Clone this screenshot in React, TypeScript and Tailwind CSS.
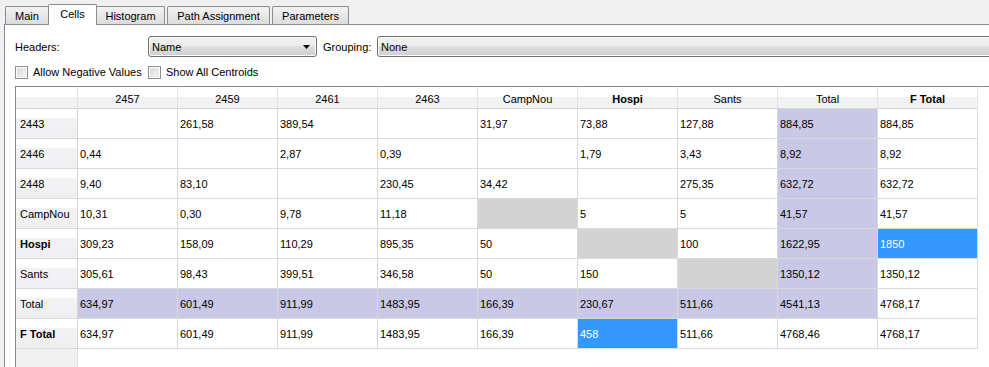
import React from "react";

type Cell = { t: string; k?: "p" | "b" | "g" };

const cols = ["2457", "2459", "2461", "2463", "CampNou", "Hospi", "Sants", "Total", "F Total"];
const boldCols = new Set(["Hospi", "F Total"]);

const c = (t: string, k?: "p" | "b" | "g"): Cell => ({ t, k });

const rows: { h: string; bold?: boolean; cells: Cell[] }[] = [
  { h: "2443", cells: [c(""), c("261,58"), c("389,54"), c(""), c("31,97"), c("73,88"), c("127,88"), c("884,85", "p"), c("884,85")] },
  { h: "2446", cells: [c("0,44"), c(""), c("2,87"), c("0,39"), c(""), c("1,79"), c("3,43"), c("8,92", "p"), c("8,92")] },
  { h: "2448", cells: [c("9,40"), c("83,10"), c(""), c("230,45"), c("34,42"), c(""), c("275,35"), c("632,72", "p"), c("632,72")] },
  { h: "CampNou", cells: [c("10,31"), c("0,30"), c("9,78"), c("11,18"), c("", "g"), c("5"), c("5"), c("41,57", "p"), c("41,57")] },
  { h: "Hospi", bold: true, cells: [c("309,23"), c("158,09"), c("110,29"), c("895,35"), c("50"), c("", "g"), c("100"), c("1622,95", "p"), c("1850", "b")] },
  { h: "Sants", cells: [c("305,61"), c("98,43"), c("399,51"), c("346,58"), c("50"), c("150"), c("", "g"), c("1350,12", "p"), c("1350,12")] },
  { h: "Total", cells: [c("634,97", "p"), c("601,49", "p"), c("911,99", "p"), c("1483,95", "p"), c("166,39", "p"), c("230,67", "p"), c("511,66", "p"), c("4541,13", "p"), c("4768,17")] },
  { h: "F Total", bold: true, cells: [c("634,97"), c("601,49"), c("911,99"), c("1483,95"), c("166,39"), c("458", "b"), c("511,66"), c("4768,46"), c("4768,17")] },
];

function bgClass(k?: "p" | "b" | "g") {
  if (k === "p") return "bg-[#c9c8e6] text-black";
  if (k === "b") return "bg-[#3399ff] text-white";
  if (k === "g") return "bg-[#d3d3d3]";
  return "bg-white text-black";
}

function Tab({ label, w, selected, ml }: { label: string; w: string; selected?: boolean; ml: string }) {
  if (selected) {
    return (
      <div
        className={`relative z-10 shrink-0 ${w} ${ml} h-[21px] mb-[-1px] bg-white border border-b-0 border-[#898c95] rounded-t-[2px] flex items-start justify-center pt-[4px]`}
      >
        {label}
      </div>
    );
  }
  return (
    <div
      className={`shrink-0 ${w} ${ml} h-[18px] bg-gradient-to-b from-[#f3f3f3] to-[#dcdcdc] border border-b-0 border-[#898c95] rounded-t-[2px] flex items-center justify-center pt-[2px]`}
    >
      {label}
    </div>
  );
}

function Checkbox() {
  return (
    <div className="shrink-0 w-[13px] h-[13px] border border-[#8e8f8f] bg-white p-[1px]">
      <div className="w-full h-full bg-gradient-to-br from-[#d8d8d8] to-[#f6f6f6] border border-[#e4e4e4]" />
    </div>
  );
}

function Combo({ text, w, arrow }: { text: string; w: string; arrow?: boolean }) {
  return (
    <div
      className={`shrink-0 ${w} h-[21px] border border-[#707070] rounded-[3px] flex items-center pl-[3px] pr-[4px] bg-[linear-gradient(to_bottom,#f2f2f2_0%,#ebebeb_48%,#dddddd_52%,#cfcfcf_100%)] shadow-[inset_0_0_0_1px_#fcfcfc]`}
    >
      <span className="flex-1 pt-[1px]">{text}</span>
      {arrow && (
        <svg width="7" height="4" viewBox="0 0 7 4" className="mr-[2px]">
          <path d="M0 0H7L3.5 4Z" fill="#000" />
        </svg>
      )}
    </div>
  );
}

export default function App() {
  return (
    <div className="w-[989px] h-[367px] overflow-hidden bg-[#f0f0f0] font-['Liberation_Sans',Arial,sans-serif] text-[11px] text-black leading-none">
      {/* tab bar */}
      <div className="flex items-end h-[24px] pl-[5px]">
        <Tab label="Main" w="w-[44px]" ml="ml-0" />
        <Tab label="Cells" w="w-[49px]" ml="ml-[-1px]" selected />
        <Tab label="Histogram" w="w-[69px]" ml="ml-[-1px]" />
        <Tab label="Path Assignment" w="w-[103px]" ml="ml-[2px]" />
        <Tab label="Parameters" w="w-[77px]" ml="ml-[2px]" />
      </div>
      {/* panel */}
      <div className="ml-[4px] h-[343px] border-l border-t border-[#898c95] bg-white overflow-hidden">
        <div className="pl-[10px] pt-[11px]">
          <div className="flex items-center h-[21px]">
            <span className="shrink-0 w-[133px] pt-[1px]">Headers:</span>
            <Combo text="Name" w="w-[169px]" arrow />
            <span className="shrink-0 ml-[6px] w-[54px] pt-[1px]">Grouping:</span>
            <Combo text="None" w="w-[640px]" />
          </div>
          <div className="flex items-center mt-[8px] h-[14px]">
            <Checkbox />
            <span className="shrink-0 ml-[5px] w-[115px]">Allow Negative Values</span>
            <Checkbox />
            <span className="shrink-0 ml-[5px]">Show All Centroids</span>
          </div>
          {/* table */}
          <div className="mt-[7px] w-[1000px] border-l border-t border-[#828790] bg-white">
            <div className="grid grid-cols-[62px_repeat(9,100px)]">
              <div className="h-[22px] border-r border-b border-r-[#e3e3e3] border-b-[#d5d5d5] bg-[linear-gradient(to_bottom,#ffffff_0%,#ffffff_45%,#f1f2f4_50%,#f1f2f4_100%)]" />
              {cols.map((h) => (
                <div
                  key={h}
                  className={`h-[22px] border-r border-b border-r-[#e3e3e3] border-b-[#d5d5d5] flex items-center justify-center pt-[3px] bg-[linear-gradient(to_bottom,#ffffff_0%,#ffffff_45%,#f1f2f4_50%,#f1f2f4_100%)] ${boldCols.has(h) ? "font-bold" : ""}`}
                >
                  {h}
                </div>
              ))}
              {rows.map((r) => (
                <React.Fragment key={r.h}>
                  <div
                    className={`h-[30px] border-r border-b border-r-[#d5d5d5] border-b-[#d9d9d9] flex items-center pl-[4px] pt-[2px] bg-[linear-gradient(to_bottom,#ffffff_0%,#ffffff_30%,#f3f3f5_32%,#eeeff1_100%)] ${r.bold ? "font-bold" : ""}`}
                  >
                    {r.h}
                  </div>
                  {r.cells.map((cell, i) => (
                    <div
                      key={i}
                      className={`h-[30px] border-r border-b border-[#d9d9d9] flex items-center pl-[2px] pt-[2px] ${bgClass(cell.k)}`}
                    >
                      {cell.t}
                    </div>
                  ))}
                </React.Fragment>
              ))}
              <div className="h-[30px] border-r border-[#e3e3e3] bg-[#f0f0f0]" />
            </div>
          </div>
        </div>
      </div>
    </div>
  );
}
